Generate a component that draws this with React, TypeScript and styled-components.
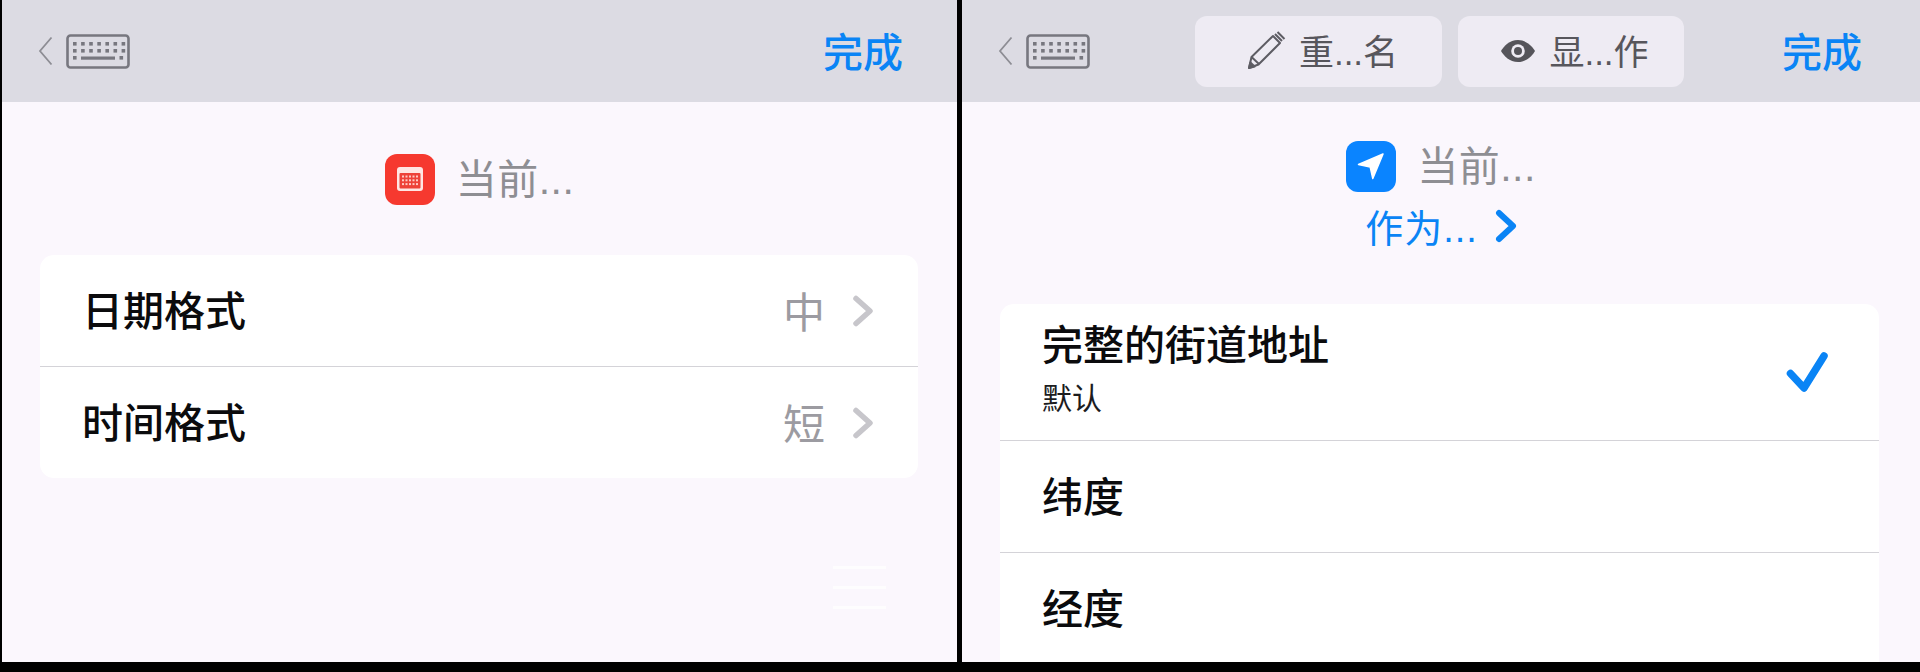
import { createGlobalStyle } from 'styled-components';
import styled from 'styled-components';

const FONT = '"Liberation Sans", "Noto Sans CJK SC", sans-serif';

const GlobalStyle = createGlobalStyle`
  html, body {
    margin: 0;
    padding: 0;
    background: #000;
    font-family: ${FONT};
  }
`;

const Screen = styled.div`
  display: flex;
  width: 1920px;
  height: 672px;
  background: #000;
  overflow: hidden;
`;

const Panel = styled.section<{ $width: number; $gapLeft: number }>`
  position: relative;
  flex: none;
  width: ${(p) => p.$width}px;
  height: 662px;
  margin-left: ${(p) => p.$gapLeft}px;
  background: #fbf7fd;
  overflow: hidden;
`;

const Toolbar = styled.header<{ $right: number }>`
  display: flex;
  align-items: center;
  height: 102px;
  padding: 0 ${(p) => p.$right}px 0 36px;
  box-sizing: border-box;
  background: #dcdbe3;
`;

const KeyboardWrap = styled.div`
  display: flex;
  align-items: center;
  gap: 13px;
  flex: none;
`;

const ActionGroup = styled.div`
  display: flex;
  gap: 16px;
  margin-left: 105px;
`;

const ActionButton = styled.button<{ $width: number; $gap: number }>`
  display: flex;
  align-items: center;
  justify-content: center;
  gap: ${(p) => p.$gap}px;
  width: ${(p) => p.$width}px;
  height: 71px;
  padding: 0 0 0 7px;
  box-sizing: border-box;
  border: 0;
  border-radius: 12px;
  background: #eeebf3;
  color: #57565c;
  font: 400 35px/1 ${FONT};
`;

const ActionText = styled.span`
  padding-top: 3px;
`;

const DoneButton = styled.span`
  margin-left: auto;
  padding-top: 3px;
  color: #0a84f5;
  font-size: 40px;
  font-weight: 500;
  line-height: 1;
`;

const Heading = styled.div<{ $top: number; $height: number }>`
  display: flex;
  flex-direction: column;
  align-items: center;
  height: ${(p) => p.$height}px;
  padding-top: ${(p) => p.$top}px;
  box-sizing: border-box;
`;

const TitleRow = styled.div`
  display: flex;
  align-items: center;
  gap: 21px;
  height: 52px;
  color: #8e8e93;
  font-size: 41px;
  letter-spacing: 0.5px;
  line-height: 1;
`;

const TitleText = styled.span`
  padding-top: 2px;
`;

const IconTile = styled.span<{ $color: string }>`
  display: flex;
  align-items: center;
  justify-content: center;
  width: 50px;
  height: 51px;
  border-radius: 12px;
  background: ${(p) => p.$color};
`;

const AsLink = styled.div`
  display: flex;
  align-items: center;
  gap: 17px;
  margin-top: 7px;
  color: #0a84f5;
  font-size: 38px;
  letter-spacing: 1px;
  line-height: 1.2;
`;

const AsLinkText = styled.span`
  padding-top: 8px;
`;

const Card = styled.div<{ $left: number; $right: number; $closed?: boolean }>`
  margin: 0 ${(p) => p.$right}px 0 ${(p) => p.$left}px;
  border-radius: ${(p) => (p.$closed ? '14px' : '14px 14px 0 0')};
  background: #fff;
  overflow: hidden;
`;

const Row = styled.div<{ $height: number; $first?: boolean }>`
  display: flex;
  align-items: center;
  height: ${(p) => p.$height}px;
  padding: 0 42px;
  box-sizing: border-box;
  border-top: ${(p) => (p.$first ? '0' : '1px solid #d4d3d8')};
`;

const RowText = styled.div`
  display: flex;
  flex-direction: column;
  flex: 1;
  padding-top: 3px;
`;

const RowLabel = styled.span`
  color: #0b0b0d;
  font-size: 41px;
  font-weight: 500;
  line-height: 52px;
`;

const RowHint = styled.span`
  margin: 9px 0 10px;
  color: #1c1c1e;
  font-size: 30px;
  line-height: 36px;
`;

const RowValue = styled.span`
  margin-right: 27px;
  padding-top: 6px;
  color: #9c9ba1;
  font-size: 42px;
  line-height: 1;
`;

const CheckSlot = styled.span`
  display: flex;
  margin-right: 9px;
`;

const GripLines = styled.div`
  position: absolute;
  left: 831px;
  top: 566px;
  display: flex;
  flex-direction: column;
  gap: 17px;
  width: 53px;
  opacity: 0.85;
`;

const GripLine = styled.span`
  height: 3px;
  background: #fff;
`;

const KeyboardIcon = () => {
  const keys: JSX.Element[] = [];
  for (let y = 0; y < 2; y += 1) {
    for (let x = 0; x < 7; x += 1) {
      keys.push(<rect key={`${x}-${y}`} x={7 + x * 8.1} y={8 + y * 7} width="3.6" height="3.6" fill="#77777f" />);
    }
  }
  return (
    <svg width="64" height="35" viewBox="0 0 64 35" fill="none">
      <rect x="1.5" y="1.5" width="61" height="32" rx="3" stroke="#77777f" strokeWidth="2.6" />
      {keys}
      <rect x="7" y="22" width="3.6" height="3.6" fill="#77777f" />
      <rect x="15" y="22.5" width="34" height="3.2" fill="#77777f" />
      <rect x="53.5" y="22" width="3.6" height="3.6" fill="#77777f" />
    </svg>
  );
};

const BackChevron = () => (
  <svg width="15" height="30" viewBox="0 0 15 30" fill="none">
    <path d="M13.5 1.5 2 15l11.5 13.5" stroke="#8d8d94" strokeWidth="1.8" />
  </svg>
);

const CalendarIcon = () => {
  const dots: JSX.Element[] = [];
  for (let y = 0; y < 3; y += 1) {
    for (let x = 0; x < 5; x += 1) {
      dots.push(<rect key={`${x}-${y}`} x={5 + x * 3.5} y={8.5 + y * 3.8} width="2" height="2" fill="#ffc9c4" />);
    }
  }
  return (
    <svg width="26" height="24" viewBox="0 0 26 24">
      <rect width="26" height="24" rx="3" fill="#ffe6e3" />
      <rect x="2.5" y="6" width="21" height="15.5" rx="1" fill="#ee4238" />
      {dots}
    </svg>
  );
};

const LocationIcon = () => (
  <svg width="30" height="30" viewBox="0 0 30 30">
    <path d="M27 3 2.5 13.5 14.2 16l2.6 11.5Z" fill="#fff" stroke="#fff" strokeWidth="1.5" strokeLinejoin="round" />
  </svg>
);

const PencilIcon = () => (
  <svg width="40" height="40" viewBox="0 0 40 40" fill="none" stroke="#5d5c63" strokeWidth="2" strokeLinejoin="round">
    <path d="M3 37 5.5 26 27 5l7 7-21.5 21.5Z" />
    <path d="M5.5 26 13 33" />
    <path d="M3 37l1.4-5.5 4.2 4Z" fill="#5d5c63" />
    <path d="m29 3 7 7M31.5 1l7 7" />
  </svg>
);

const EyeIcon = () => (
  <svg width="36" height="24" viewBox="0 0 36 24">
    <path d="M18 1C9.5 1 3.5 7.5 1 12c2.5 4.5 8.5 11 17 11s14.5-6.5 17-11C32.5 7.5 26.5 1 18 1Z" fill="#55545a" />
    <circle cx="18" cy="12" r="6.8" fill="#eeebf3" />
    <circle cx="18" cy="12" r="4" fill="#55545a" />
  </svg>
);

const ChevronRight = () => (
  <svg width="24" height="36" viewBox="0 0 24 36" fill="none">
    <path d="M4 5.5 18 18 4 30.5" stroke="#c7c6cb" strokeWidth="5.5" strokeLinecap="round" strokeLinejoin="round" />
  </svg>
);

const LinkChevron = () => (
  <svg width="22" height="34" viewBox="0 0 22 34" fill="none">
    <path d="M4 4l14 13L4 30" stroke="#0a84f5" strokeWidth="6" strokeLinecap="round" strokeLinejoin="round" />
  </svg>
);

const CheckMark = () => (
  <svg width="44" height="42" viewBox="0 0 44 42" fill="none">
    <path d="M6.5 22.5 20 37 40 5" stroke="#0a84f5" strokeWidth="7.5" strokeLinecap="round" strokeLinejoin="round" />
  </svg>
);

const App = (): JSX.Element => (
  <Screen>
    <GlobalStyle />

    <Panel $width={955} $gapLeft={2}>
      <Toolbar $right={54}>
        <KeyboardWrap>
          <BackChevron />
          <KeyboardIcon />
        </KeyboardWrap>
        <DoneButton>完成</DoneButton>
      </Toolbar>
      <Heading $top={51} $height={153}>
        <TitleRow>
          <IconTile $color="#f6392f"><CalendarIcon /></IconTile>
          <TitleText>当前...</TitleText>
        </TitleRow>
      </Heading>
      <Card $left={38} $right={39} $closed>
        <Row $height={111} $first>
          <RowText><RowLabel>日期格式</RowLabel></RowText>
          <RowValue>中</RowValue>
          <ChevronRight />
        </Row>
        <Row $height={112}>
          <RowText><RowLabel>时间格式</RowLabel></RowText>
          <RowValue>短</RowValue>
          <ChevronRight />
        </Row>
      </Card>
      <GripLines>
        <GripLine />
        <GripLine />
        <GripLine />
      </GripLines>
    </Panel>

    <Panel $width={958} $gapLeft={5}>
      <Toolbar $right={58}>
        <KeyboardWrap>
          <BackChevron />
          <KeyboardIcon />
        </KeyboardWrap>
        <ActionGroup>
          <ActionButton $width={247} $gap={13}>
            <PencilIcon />
            <ActionText>重...名</ActionText>
          </ActionButton>
          <ActionButton $width={226} $gap={13}>
            <EyeIcon />
            <ActionText>显...作</ActionText>
          </ActionButton>
        </ActionGroup>
        <DoneButton>完成</DoneButton>
      </Toolbar>
      <Heading $top={38} $height={202}>
        <TitleRow>
          <IconTile $color="#0a84ff"><LocationIcon /></IconTile>
          <TitleText>当前...</TitleText>
        </TitleRow>
        <AsLink>
          <AsLinkText>作为...</AsLinkText>
          <LinkChevron />
        </AsLink>
      </Heading>
      <Card $left={38} $right={41}>
        <Row $height={136} $first>
          <RowText>
            <RowLabel>完整的街道地址</RowLabel>
            <RowHint>默认</RowHint>
          </RowText>
          <CheckSlot><CheckMark /></CheckSlot>
        </Row>
        <Row $height={112}>
          <RowText><RowLabel>纬度</RowLabel></RowText>
        </Row>
        <Row $height={112}>
          <RowText><RowLabel>经度</RowLabel></RowText>
        </Row>
      </Card>
    </Panel>
  </Screen>
);

export default App;
